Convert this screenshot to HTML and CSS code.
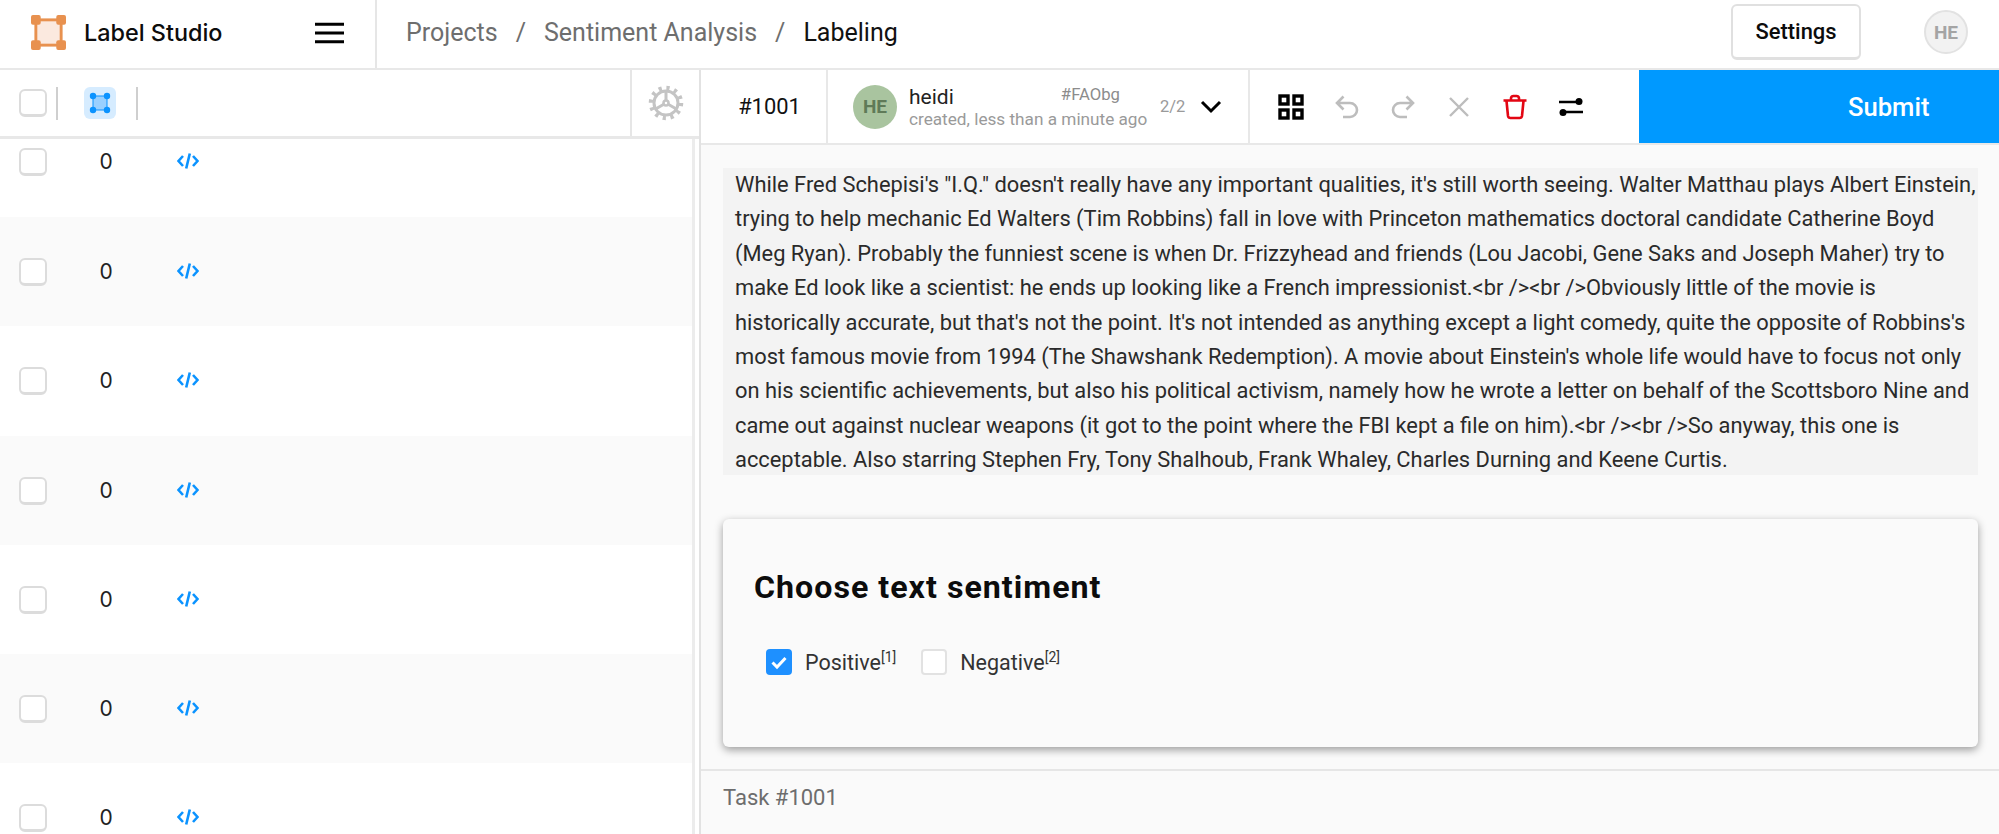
FILE: index.html
```html
<!DOCTYPE html>
<html lang="en">
<head>
<meta charset="utf-8">
<title>Label Studio</title>
<link rel="stylesheet" href="styles.css">
</head>
<body>
<div class="app">
  <header class="topbar">
    <div class="brand">
      <svg class="logo" viewBox="0 0 36 36"><rect x="5" y="5" width="26" height="26" fill="#fbe9df" stroke="#e8914f" stroke-width="3"/><rect x="0" y="0" width="10" height="10" rx="2" fill="#e8914f"/><rect x="26" y="0" width="10" height="10" rx="2" fill="#e8914f"/><rect x="0" y="26" width="10" height="10" rx="2" fill="#e8914f"/><rect x="26" y="26" width="10" height="10" rx="2" fill="#e8914f"/></svg>
      <span class="brand-name">Label Studio</span>
      <svg class="burger" viewBox="0 0 30 22"><path d="M0 2h30M0 11h30M0 20h30" stroke="#000" stroke-width="3"/></svg>
    </div>
    <nav class="crumbs">
      <span>Projects</span><span class="sep">/</span><span>Sentiment Analysis</span><span class="sep">/</span><span class="current">Labeling</span>
    </nav>
    <button class="settings">Settings</button>
    <div class="me">HE</div>
  </header>
  <main class="body">
    <section class="left">
      <div class="left-bar">
        <span class="check"></span>
        <span class="vline first"></span>
        <span class="chip"><svg viewBox="0 0 22 22" width="22" height="22"><rect x="4" y="4" width="14" height="14" fill="#99d0ff"/><path d="M4 4h14v14H4z" fill="none" stroke="#0b93ff" stroke-width="1"/><circle cx="4" cy="4" r="3.2" fill="#0b93ff"/><circle cx="18" cy="4" r="3.2" fill="#0b93ff"/><circle cx="4" cy="18" r="3.2" fill="#0b93ff"/><circle cx="18" cy="18" r="3.2" fill="#0b93ff"/></svg></span>
        <span class="vline"></span>
        <span class="gear-cell">
          <svg viewBox="0 0 36 36" width="36" height="36" fill="none" stroke="#c4c4c4"><circle cx="18" cy="18" r="12" stroke-width="3"/><circle cx="18" cy="18" r="15" stroke-width="4.5" stroke-dasharray="3.2 4.65"/><path d="M18 6v12M18 18L7.6 24M18 18l10.4 6" stroke-width="3"/><circle cx="18" cy="18" r="2.5" fill="#fff" stroke-width="2.5"/></svg>
        </span>
      </div>
      <div class="rows">
        <div class="row first"><span class="check"></span><span class="num">0</span><svg class="code" viewBox="0 0 22 18"><path d="M6 4L1.5 9 6 14M16 4l4.5 5-4.5 5M12.8 1.5L9.2 16.5" fill="none" stroke="#0b93ff" stroke-width="2.6"/></svg></div>
        <div class="row alt"><span class="check"></span><span class="num">0</span><svg class="code" viewBox="0 0 22 18"><path d="M6 4L1.5 9 6 14M16 4l4.5 5-4.5 5M12.8 1.5L9.2 16.5" fill="none" stroke="#0b93ff" stroke-width="2.6"/></svg></div>
        <div class="row"><span class="check"></span><span class="num">0</span><svg class="code" viewBox="0 0 22 18"><path d="M6 4L1.5 9 6 14M16 4l4.5 5-4.5 5M12.8 1.5L9.2 16.5" fill="none" stroke="#0b93ff" stroke-width="2.6"/></svg></div>
        <div class="row alt"><span class="check"></span><span class="num">0</span><svg class="code" viewBox="0 0 22 18"><path d="M6 4L1.5 9 6 14M16 4l4.5 5-4.5 5M12.8 1.5L9.2 16.5" fill="none" stroke="#0b93ff" stroke-width="2.6"/></svg></div>
        <div class="row"><span class="check"></span><span class="num">0</span><svg class="code" viewBox="0 0 22 18"><path d="M6 4L1.5 9 6 14M16 4l4.5 5-4.5 5M12.8 1.5L9.2 16.5" fill="none" stroke="#0b93ff" stroke-width="2.6"/></svg></div>
        <div class="row alt"><span class="check"></span><span class="num">0</span><svg class="code" viewBox="0 0 22 18"><path d="M6 4L1.5 9 6 14M16 4l4.5 5-4.5 5M12.8 1.5L9.2 16.5" fill="none" stroke="#0b93ff" stroke-width="2.6"/></svg></div>
        <div class="row"><span class="check"></span><span class="num">0</span><svg class="code" viewBox="0 0 22 18"><path d="M6 4L1.5 9 6 14M16 4l4.5 5-4.5 5M12.8 1.5L9.2 16.5" fill="none" stroke="#0b93ff" stroke-width="2.6"/></svg></div>
      </div>
    </section>
    <section class="right">
      <div class="toolbar">
        <div class="task-id">#1001</div>
        <div class="annot">
          <div class="avatar">HE</div>
          <div class="annot-text">
            <div class="annot-top"><span class="who">heidi</span><span class="hash">#FAObg</span></div>
            <div class="when">created, less than a minute ago</div>
          </div>
          <span class="count">2/2</span>
          <svg class="chev" viewBox="0 0 22 14"><path d="M2 2l9 9 9-9" fill="none" stroke="#000" stroke-width="3"/></svg>
        </div>
        <div class="tools">
          <svg class="tool" viewBox="0 0 26 26" fill="none" stroke="#000" stroke-width="3.4"><rect x="2" y="2" width="8" height="8"/><rect x="16" y="2" width="8" height="8"/><rect x="2" y="16" width="8" height="8"/><rect x="16" y="16" width="8" height="8"/></svg>
          <svg class="tool" viewBox="0 0 26 26" fill="none" stroke="#bdbdbd" stroke-width="2.6"><path d="M9.5 2.5L3 9l6.5 6.5M3 9h13a7 7 0 0 1 0 14H9"/></svg>
          <svg class="tool" viewBox="0 0 26 26" fill="none" stroke="#bdbdbd" stroke-width="2.6"><path d="M16.5 2.500L23 9l-6.500 6.500M23 9H10a7 7 0 0 0 0 14h7"/></svg>
          <svg class="tool" viewBox="0 0 26 26" fill="none" stroke="#bdbdbd" stroke-width="2.4"><path d="M4 4l18 18M22 4L4 22"/></svg>
          <svg class="tool" viewBox="0 0 26 26" fill="none" stroke="#e30613" stroke-width="2.6"><path d="M1.500 6.500h23M9 6V4a2.500 2.500 0 0 1 2.500-2h3A2.500 2.500 0 0 1 17 4v2M4.500 7l1.500 15a2.500 2.500 0 0 0 2.500 2h9a2.500 2.500 0 0 0 2.500-2l1.500-15"/></svg>
          <svg class="tool" viewBox="0 0 26 26" fill="none" stroke="#000" stroke-width="2.6"><path d="M1 8h20M5 18h20"/><circle cx="21" cy="7.500" r="3.500" fill="#000" stroke="none"/><circle cx="5" cy="18.500" r="3.500" fill="#000" stroke="none"/></svg>
        </div>
        <button class="submit">Submit</button>
      </div>
      <div class="workspace">
        <div class="passage">While Fred Schepisi's "I.Q." doesn't really have any important qualities, it's still worth seeing. Walter Matthau plays Albert Einstein, trying to help mechanic Ed Walters (Tim Robbins) fall in love with Princeton mathematics doctoral candidate Catherine Boyd (Meg Ryan). Probably the funniest scene is when Dr. Frizzyhead and friends (Lou Jacobi, Gene Saks and Joseph Maher) try to make Ed look like a scientist: he ends up looking like a French impressionist.&lt;br /&gt;&lt;br /&gt;Obviously little of the movie is historically accurate, but that's not the point. It's not intended as anything except a light comedy, quite the opposite of Robbins's most famous movie from 1994 (The Shawshank Redemption). A movie about Einstein's whole life would have to focus not only on his scientific achievements, but also his political activism, namely how he wrote a letter on behalf of the Scottsboro Nine and came out against nuclear weapons (it got to the point where the FBI kept a file on him).&lt;br /&gt;&lt;br /&gt;So anyway, this one is acceptable. Also starring Stephen Fry, Tony Shalhoub, Frank Whaley, Charles Durning and Keene Curtis.</div>
        <div class="card">
          <h2 class="card-title">Choose text sentiment</h2>
          <div class="choices">
            <label class="choice"><span class="box on"><svg viewBox="0 0 26 26" width="26" height="26"><path d="M6.500 13.500l4.500 4.500 8.500-9" fill="none" stroke="#fff" stroke-width="3"/></svg></span>Positive<sup class="hot">[1]</sup></label>
            <label class="choice"><span class="box"></span>Negative<sup class="hot">[2]</sup></label>
          </div>
        </div>
      </div>
      <footer class="foot">Task #1001</footer>
    </section>
  </main>
</div>
</body>
</html>
```
FILE: styles.css
```css
* { box-sizing: border-box; }
html, body { margin: 0; height: 100%; overflow: hidden; }
body { font-family: Roboto, "Liberation Sans", sans-serif; color: #111; background: #fff; }
.app { width: 1999px; height: 834px; display: flex; flex-direction: column; overflow: hidden; }

.topbar { height: 70px; flex: none; display: flex; align-items: center; border-bottom: 2px solid #e8e8e8; }
.brand { width: 377px; height: 100%; flex: none; display: flex; align-items: center; padding: 0 0 3px 31px; border-right: 2px solid #e6e6e6; }
.logo { width: 35px; height: 35px; flex: none; }
.brand-name { font-family: Inter, sans-serif; font-weight: 500; font-size: 23.400px; margin-left: 18px; color: #0c0c0c; width: 231px; flex: none; }
.burger { width: 29px; height: 22px; flex: none; }
.crumbs { flex: 1; display: flex; align-items: center; padding: 0 0 3px 29px; font-size: 25px; color: #6e6e6e; }
.sep { margin: 0 18px; }
.current { color: #111; }
.settings { width: 130px; height: 56px; margin: 0 63px 4px 0; border: 2px solid #e0e0e0; border-bottom-width: 3px; border-radius: 6px; background: #fff; font: 500 21.900px Roboto, sans-serif; color: #0c0c0c; }
.me { width: 44px; height: 44px; margin: 0 31px 4px 0; border-radius: 50%; background: #f2f2f2; border: 2px solid #e2e2e2; color: #a4a4a4; font-weight: 700; font-size: 19px; display: flex; align-items: center; justify-content: center; }

.body { flex: 1; display: flex; min-height: 0; }
.left { width: 701px; flex: none; display: flex; flex-direction: column; border-right: 2px solid #e2e2e2; }
.left-bar { height: 69px; flex: none; display: flex; align-items: center; padding-left: 19px; border-bottom: 3px solid #e8e8e8; }
.check { width: 28px; height: 28px; flex: none; border: 2px solid #dcdcdc; border-bottom-width: 3px; border-radius: 6px; background: #fff; }
.vline { width: 2px; height: 33px; background: #cfcfcf; flex: none; }
.vline.first { margin: 0 26px 0 9px; }
.chip { width: 32px; height: 32px; flex: none; border-radius: 6px; background: #d6ecff; display: flex; align-items: center; justify-content: center; margin-right: 20px; }
.gear-cell { margin-left: auto; width: 69px; height: 100%; border-left: 2px solid #e6e6e6; display: flex; align-items: center; justify-content: center; flex: none; }
.rows { flex: 1; width: 695px; border-right: 3px solid #ececec; overflow: hidden; }
.row { height: 109.300px; display: flex; align-items: flex-start; padding: 41px 0 0 19px; background: #fff; }
.row.first { height: 78px; padding-top: 9px; }
.row.alt { background: #fafafa; }
.num { width: 64px; margin-left: 27px; text-align: center; font-size: 21px; line-height: 28px; color: #222; flex: none; font-family: Inter, sans-serif; }
.code { width: 22px; height: 18px; margin: 4px 0 0 39px; flex: none; }

.right { flex: 1; min-width: 0; display: flex; flex-direction: column; background: #fafafa; }
.toolbar { height: 75px; flex: none; display: flex; background: #fff; border-bottom: 2px solid #e8e8e8; }
.task-id { width: 127px; flex: none; padding-left: 12px; border-right: 2px solid #e8e8e8; display: flex; align-items: center; justify-content: center; font-size: 21.900px; color: #111; }
.annot { width: 422px; flex: none; border-right: 2px solid #e8e8e8; display: flex; align-items: center; padding-left: 25px; }
.avatar { width: 44px; height: 44px; border-radius: 50%; background: #a9c49f; color: #5f7a58; font-weight: 700; font-size: 19px; display: flex; align-items: center; justify-content: center; flex: none; }
.annot-text { margin-left: 12px; width: 238px; flex: none; }
.annot-top { display: flex; justify-content: space-between; padding-right: 27px; align-items: flex-start; height: 24px; }
.who { font-size: 21px; line-height: 24px; color: #222; }
.hash { font-size: 16.700px; line-height: 20px; color: #8c8c8c; }
.when { font-size: 17.200px; line-height: 20px; color: #9a9a9a; white-space: nowrap; }
.count { font-size: 16.500px; color: #9a9a9a; margin-left: 13px; }
.chev { width: 22px; height: 14px; margin-left: 15px; flex: none; }
.tools { width: 389px; flex: none; display: flex; align-items: center; padding-left: 28px; gap: 30px; }
.tool { width: 26px; height: 26px; flex: none; }
.submit { flex: 1; border: 0; background: #0099ff; color: #fff; font: 500 25.600px Roboto, sans-serif; padding: 0 0 0 209px; text-align: left; }

.workspace { flex: 1; min-height: 0; padding: 23px 21px 0 22px; }
.passage { background: #f3f3f3; padding: 0 0 0 12px; font-size: 21.860px; line-height: 34.400px; color: #2a2a2a; height: 307px; }
.card { margin-top: 44px; height: 228px; padding: 49px 31px 0; background: #fafafa; border-radius: 6px; box-shadow: 0 3px 8px rgba(0,0,0,.38); }
.card-title { margin: 0; font-size: 32.200px; line-height: 38px; font-weight: 700; letter-spacing: 1px; color: #0c0c0c; }
.choices { display: flex; margin-top: 43px; padding-left: 12px; gap: 25px; }
.choice { display: flex; align-items: center; font-size: 21.500px; color: #333; height: 26px; }
.box { width: 26px; height: 26px; border-radius: 4px; border: 2px solid #e2e2e2; background: #fff; margin-right: 13px; flex: none; }
.box.on { background: #1e90ff; border: 0; }
.hot { font-size: 14px; line-height: 14px; align-self: flex-start; margin-top: 1px; }
.foot { height: 65px; flex: none; border-top: 2px solid #e6e6e6; padding: 11px 0 0 22px; font-size: 22px; color: #6d6d6d; line-height: 32px; }
```
